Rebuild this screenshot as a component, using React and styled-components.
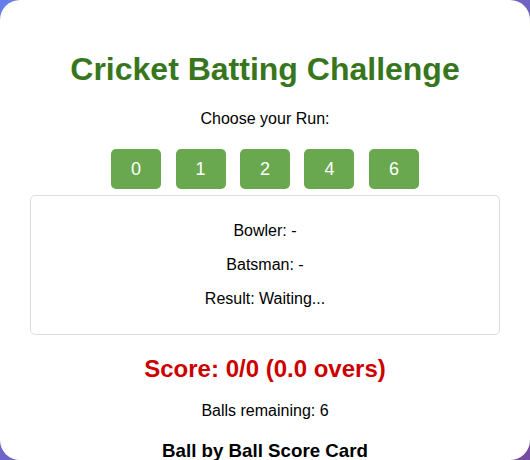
import React from "react";
import styled, { createGlobalStyle } from "styled-components";

const Global = createGlobalStyle`
  html, body { margin: 0; padding: 0; }
  body {
    font-family: "Liberation Sans", Arial, sans-serif;
    background: linear-gradient(135deg, #667eea 0%, #764ba2 100%);
    height: 460px;
    overflow: hidden;
  }
`;

const Card = styled.div`
  box-sizing: border-box;
  width: 530px;
  height: 460px;
  background: #fff;
  border-radius: 20px;
  padding: 30px 30px 0;
  overflow: hidden;
  text-align: center;
  color: #000;
`;

const Title = styled.h1`
  font-size: 32px;
  font-weight: bold;
  color: #38761d;
  margin: 21.44px 0;
  line-height: 37px;
`;

const Text = styled.p`
  font-size: 16px;
  margin: 16px 0;
  line-height: 18px;
`;

const Buttons = styled.div`
  display: flex;
  justify-content: center;
  gap: 14.45px;
  margin: 21px 0 6px;
`;

const RunButton = styled.button`
  font-family: "Liberation Sans", Arial, sans-serif;
  font-size: 18px;
  color: #fff;
  background: #6aa84f;
  border: none;
  border-radius: 5px;
  padding: 10px 20px;
  height: 40px;
  line-height: 20px;
  cursor: pointer;
`;

const InfoBox = styled.div`
  border: 1px solid #ddd;
  border-radius: 5px;
  padding: 10px;
`;

const Score = styled.h2`
  font-size: 24px;
  font-weight: bold;
  color: #cc0000;
  margin: 20px 0;
  line-height: 27.6px;
`;

const Remaining = styled.p`
  font-size: 16px;
  margin: 20px 0 0;
  line-height: 18.4px;
`;

const SubTitle = styled.h3`
  font-size: 18.72px;
  font-weight: bold;
  margin: 18.72px 0;
  line-height: 21.5px;
`;

export default function App() {
  const runs = [0, 1, 2, 4, 6];
  return (
    <>
      <Global />
      <Card>
        <Title>Cricket Batting Challenge</Title>
        <Text>Choose your Run:</Text>
        <Buttons>
          {runs.map((r) => (
            <RunButton key={r}>{r}</RunButton>
          ))}
        </Buttons>
        <InfoBox>
          <Text>Bowler: -</Text>
          <Text>Batsman: -</Text>
          <Text>Result: Waiting...</Text>
        </InfoBox>
        <Score>Score: 0/0 (0.0 overs)</Score>
        <Remaining>Balls remaining: 6</Remaining>
        <SubTitle>Ball by Ball Score Card</SubTitle>
      </Card>
    </>
  );
}
